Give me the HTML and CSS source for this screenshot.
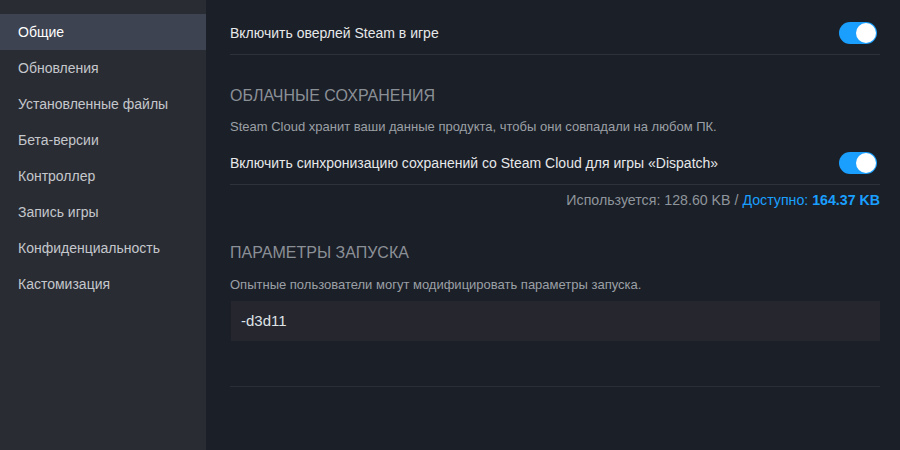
FILE: index.html
```html
<!DOCTYPE html>
<html lang="ru">
<head>
<meta charset="utf-8">
<link rel="stylesheet" href="styles.css">
</head>
<body>
<div class="app">
  <nav class="sidebar">
    <div class="nav-item active">Общие</div>
    <div class="nav-item">Обновления</div>
    <div class="nav-item">Установленные файлы</div>
    <div class="nav-item">Бета-версии</div>
    <div class="nav-item">Контроллер</div>
    <div class="nav-item">Запись игры</div>
    <div class="nav-item">Конфиденциальность</div>
    <div class="nav-item">Кастомизация</div>
  </nav>
  <main class="content">
    <div class="row first">
      <span class="row-label">Включить оверлей Steam в игре</span>
      <span class="toggle on"><span class="knob"></span></span>
    </div>
    <h2 class="section-title">Облачные сохранения</h2>
    <p class="desc">Steam Cloud хранит ваши данные продукта, чтобы они совпадали на любом ПК.</p>
    <div class="row second">
      <span class="row-label">Включить синхронизацию сохранений со Steam Cloud для игры «Dispatch»</span>
      <span class="toggle on"><span class="knob"></span></span>
    </div>
    <div class="usage">Используется: 128.60 KB / <span class="avail">Доступно: <b>164.37 KB</b></span></div>
    <h2 class="section-title launch">Параметры запуска</h2>
    <p class="desc launch-desc">Опытные пользователи могут модифицировать параметры запуска.</p>
    <div class="input">-d3d11</div>
    <div class="divider"></div>
  </main>
</div>
</body>
</html>
```
FILE: styles.css
```css
* { box-sizing: border-box; }
html, body { margin: 0; padding: 0; }
body {
  width: 900px;
  height: 450px;
  overflow: hidden;
  background: #1b1f27;
  font-family: "Liberation Sans", Arial, sans-serif;
}
.app {
  display: flex;
  height: 450px;
}
.sidebar {
  width: 206px;
  flex: none;
  background: #2a2c33;
  padding-top: 14px;
}
.nav-item {
  height: 36px;
  line-height: 36px;
  padding-left: 18px;
  font-size: 14px;
  color: #c4c7cc;
}
.nav-item.active {
  background: #3d4350;
  color: #ffffff;
}
.content {
  flex: 1;
  padding: 0 20px 0 24px;
}
.row {
  display: flex;
  align-items: center;
  justify-content: space-between;
  border-bottom: 1px solid #2e333b;
  padding-right: 3px;
}
.row.first {
  height: 55px;
  padding-top: 11px;
}
.row.second {
  height: 50px;
  padding-top: 6px;
}
.row-label {
  font-size: 14px;
  color: #e6e8ea;
}
.toggle {
  width: 38px;
  height: 22px;
  border-radius: 11px;
  background: #1a9fff;
  display: flex;
  align-items: center;
  justify-content: flex-end;
  padding: 1px;
}
.knob {
  width: 20px;
  height: 20px;
  border-radius: 50%;
  background: #ffffff;
}
.section-title {
  margin: 31px 0 0;
  height: 20px;
  line-height: 20px;
  font-size: 16px;
  font-weight: normal;
  text-transform: uppercase;
  color: #8b9097;
}
.section-title.launch {
  margin-top: 35px;
}
.desc {
  margin: 13px 0 0;
  font-size: 13px;
  line-height: 16px;
  color: #9ba0a6;
}
.launch-desc {
  margin-top: 14px;
}
.usage {
  text-align: right;
  font-size: 14.2px;
  line-height: 16px;
  margin-top: 7px;
  color: #8f959c;
}
.avail { color: #1a9fff; }
.avail b { font-weight: bold; }
.input {
  margin: 8px 0 0 1px;
  height: 40px;
  line-height: 40px;
  background: #25262e;
  padding-left: 10px;
  font-size: 15px;
  color: #dfe3e6;
}
.divider {
  margin-top: 45px;
  border-top: 1px solid #2a2f37;
}
```
